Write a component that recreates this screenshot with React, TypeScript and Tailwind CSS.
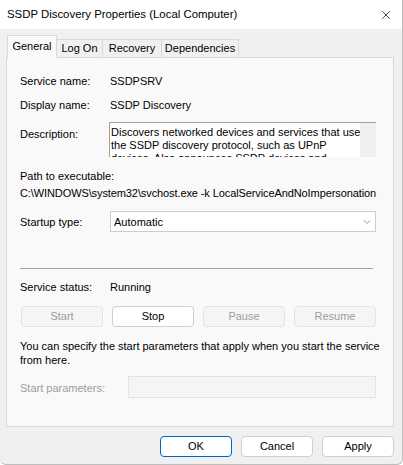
import { ChevronDown, X } from "lucide-react";

const font = { fontFamily: '"Liberation Sans", Arial, sans-serif' };

function Tab({ label, w, active }: { label: string; w: string; active?: boolean }) {
  if (active) {
    return (
      <div className={`relative z-10 -mb-px flex h-[23px] items-center justify-center border border-b-0 border-[#d9d9d9] bg-[#f9f9f9] pb-[2px] ${w}`}>
        {label}
      </div>
    );
  }
  return (
    <div className={`flex h-[18px] items-center justify-center border border-b-0 border-l-0 border-[#d9d9d9] bg-[#f0f0f0] ${w}`}>
      {label}
    </div>
  );
}

function SvcButton({ label, enabled }: { label: string; enabled?: boolean }) {
  return enabled ? (
    <div className="flex h-[21px] items-center justify-center rounded-[4px] border border-[#cfcfcf] bg-white text-black">
      {label}
    </div>
  ) : (
    <div className="flex h-[21px] items-center justify-center rounded-[4px] border border-[#e3e3e3] bg-[#f5f5f5] text-[#9d9d9d]">
      {label}
    </div>
  );
}

export default function App() {
  return (
    <div
      className="flex h-[465px] w-[403px] flex-col overflow-hidden rounded-b-[6px] border-r border-b border-[#bdbdbd] bg-[#f0f0f0] text-[11px] text-black"
      style={font}
    >
      {/* title bar */}
      <div className="flex h-[29px] shrink-0 items-center justify-between bg-white pl-[7px] pr-[9px]">
        <span className="text-[11.4px]">SSDP Discovery Properties (Local Computer)</span>
        <X size={14} strokeWidth={1.2} className="text-black" />
      </div>

      <div className="flex flex-col pl-[6px] pr-[8px] pt-[6px]">
        <div className="flex items-end pl-px">
          <Tab label="General" w="w-[50px]" active />
          <Tab label="Log On" w="w-[46px]" />
          <Tab label="Recovery" w="w-[59px]" />
          <Tab label="Dependencies" w="w-[77px]" />
        </div>

        <div className="flex h-[370px] flex-col border border-[#d9d9d9] bg-[#f9f9f9] pl-[13px] pr-[17px] pt-[16px]">
          <div className="flex h-[15px] items-center">
            <span className="w-[90px]">Service name:</span>
            <span>SSDPSRV</span>
          </div>
          <div className="mt-[9px] flex h-[15px] items-center">
            <span className="w-[90px]">Display name:</span>
            <span>SSDP Discovery</span>
          </div>
          <div className="mt-[9px] flex">
            <span className="w-[89px] pt-[5px] leading-[15px]">Description:</span>
            <div className="flex h-[35px] flex-1 overflow-hidden border-l border-t border-[#a0a0a0] bg-white">
              <div className="flex-1 whitespace-nowrap pl-[1px] pt-[3px] leading-[13px]">
                <div>Discovers networked devices and services that use</div>
                <div>the SSDP discovery protocol, such as UPnP</div>
                <div>devices. Also announces SSDP devices and</div>
              </div>
              <div className="w-[16px] shrink-0 bg-[#f0f0f0]" />
            </div>
          </div>
          <div className="mt-[12px] h-[15px] leading-[15px]">Path to executable:</div>
          <div className="mt-[2px] h-[15px] whitespace-nowrap leading-[15px] tracking-[-0.1px]">
            C:\WINDOWS\system32\svchost.exe -k LocalServiceAndNoImpersonation
          </div>
          <div className="mt-[10px] flex items-center">
            <span className="w-[90px] pt-[2px]">Startup type:</span>
            <div className="flex h-[21px] flex-1 items-center justify-between border border-[#cccccc] bg-white pl-[3px] pr-[2px]">
              <span className="pt-[2px]">Automatic</span>
              <ChevronDown size={12} strokeWidth={1.2} className="text-[#555]" />
            </div>
          </div>
          <div className="mr-[3px] mt-[36px] h-px bg-[#a0a0a0]" />
          <div className="mt-[11px] flex h-[15px] items-center">
            <span className="w-[90px]">Service status:</span>
            <span>Running</span>
          </div>
          <div className="ml-px mt-[11px] grid grid-cols-4 gap-[9px]">
            <SvcButton label="Start" />
            <SvcButton label="Stop" enabled />
            <SvcButton label="Pause" />
            <SvcButton label="Resume" />
          </div>
          <div className="mt-[12px] whitespace-nowrap leading-[14px]">
            <div>You can specify the start parameters that apply when you start the service</div>
            <div>from here.</div>
          </div>
          <div className="mt-[9px] flex items-center">
            <span className="w-[108px] pt-[2px] text-[#9d9d9d]">Start parameters:</span>
            <div className="h-[22px] flex-1 border border-[#e3e3e3] bg-[#f5f5f5]" />
          </div>
        </div>

        <div className="mt-[9px] flex justify-end gap-[9px]">
          <div className="flex h-[21px] w-[72px] items-center justify-center rounded-[4px] border border-[#0067c0] bg-white">
            OK
          </div>
          <div className="flex h-[21px] w-[72px] items-center justify-center rounded-[4px] border border-[#cfcfcf] bg-white">
            Cancel
          </div>
          <div className="flex h-[21px] w-[72px] items-center justify-center rounded-[4px] border border-[#cfcfcf] bg-white">
            Apply
          </div>
        </div>
      </div>
    </div>
  );
}
